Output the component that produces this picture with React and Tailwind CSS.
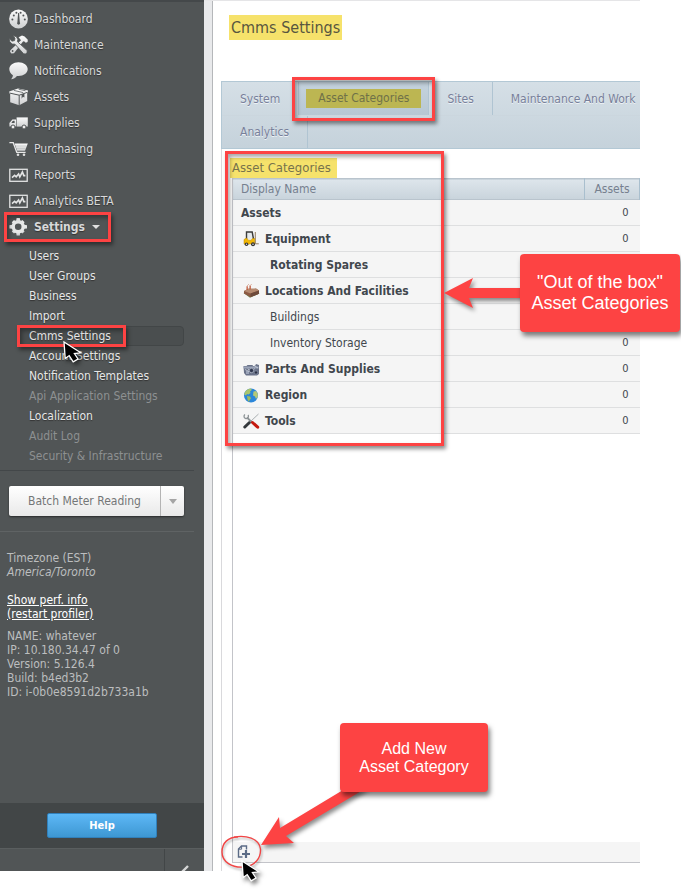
import clsx from 'clsx'

const NAV_ITEMS = [
  { label: 'Dashboard', icon: GaugeIcon },
  { label: 'Maintenance', icon: WrenchHammerIcon },
  { label: 'Notifications', icon: BubbleIcon },
  { label: 'Assets', icon: BoxIcon },
  { label: 'Supplies', icon: TruckIcon },
  { label: 'Purchasing', icon: CartIcon },
  { label: 'Reports', icon: ChartIcon },
  { label: 'Analytics BETA', icon: ChartIcon },
]

const SETTINGS_ITEMS = [
  { label: 'Users' },
  { label: 'User Groups' },
  { label: 'Business' },
  { label: 'Import' },
  { label: 'Cmms Settings', active: true },
  { label: 'Account Settings' },
  { label: 'Notification Templates' },
  { label: 'Api Application Settings', disabled: true },
  { label: 'Localization' },
  { label: 'Audit Log', disabled: true },
  { label: 'Security & Infrastructure', disabled: true },
]

const BUILD_INFO = [
  'NAME: whatever',
  'IP: 10.180.34.47 of 0',
  'Version: 5.126.4',
  'Build: b4ed3b2',
  'ID: i-0b0e8591d2b733a1b',
]

const CATEGORIES = [
  { name: 'Assets', level: 0, count: 0 },
  { name: 'Equipment', level: 1, icon: ForkliftIcon, count: 0 },
  { name: 'Rotating Spares', level: 2, bold: true },
  { name: 'Locations And Facilities', level: 1, icon: FactoryIcon },
  { name: 'Buildings', level: 2 },
  { name: 'Inventory Storage', level: 2, count: 0 },
  { name: 'Parts And Supplies', level: 1, icon: EngineIcon, count: 0 },
  { name: 'Region', level: 1, icon: GlobeIcon, count: 0 },
  { name: 'Tools', level: 1, icon: ToolsIcon, count: 0 },
]

/* ---------- sidebar icons ---------- */

function SilverGradient({ id }) {
  return (
    <linearGradient id={id} x1="0" y1="0" x2="0" y2="1">
      <stop offset="0" stopColor="#fafafa" />
      <stop offset="1" stopColor="#cfd1d2" />
    </linearGradient>
  )
}

function GaugeIcon() {
  return (
    <svg width="20" height="20" viewBox="0 0 20 20">
      <defs><SilverGradient id="g-gauge" /></defs>
      <circle cx="9.5" cy="10" r="9.4" fill="url(#g-gauge)" />
      <g fill="#515556">
        <circle cx="3.4" cy="10.5" r="1" />
        <circle cx="4.8" cy="6.4" r="1" />
        <circle cx="7.4" cy="3.8" r="1" />
        <circle cx="11.6" cy="3.8" r="1" />
        <circle cx="14.4" cy="6.4" r="1" />
        <circle cx="15.8" cy="10.5" r="1" />
        <path d="M9.1 4h1l.7 9.2a1.5 1.5 0 1 1-2.4 0z" />
      </g>
    </svg>
  )
}

function WrenchHammerIcon() {
  return (
    <svg width="20" height="20" viewBox="0 0 20 20">
      <defs><SilverGradient id="g-wrench" /></defs>
      <path d="M9.600 2.200 13 .6l2.600 1 3.200 3.200-.2 2.200-1.800.8-1.800-1.600-1 .2L5 18.200l-2.600.4-1.400-1.800.4-1.600L12 5.200z" fill="url(#g-wrench)" />
      <path d="M4 .6 7.400 1.800l1.400 2.600-.4 2.200 9.800 9-.2 2-1.400 1.400-2-.2L6 9.200 3.200 9 .8 6.800.2 3.600l2.800 2.600 2.600-.6.4-2.400z" fill="url(#g-wrench)" stroke="#515556" strokeWidth=".8" />
      <circle cx="3.600" cy="16" r=".9" fill="#515556" />
    </svg>
  )
}

function BubbleIcon() {
  return (
    <svg width="20" height="20" viewBox="0 0 20 20">
      <defs><SilverGradient id="g-bubble" /></defs>
      <path d="M9.5 1.2c5.2 0 9.2 3 9.2 6.900s-4 7-9.200 7c-.6 0-1 0-1.600-.1-1.300 1.900-3.300 3-5.900 3.300 1-.9 1.800-2.400 1.900-4.100C1.600 12.900.3 10.700.3 8.100.3 4.200 4.300 1.200 9.500 1.200z" fill="url(#g-bubble)" />
    </svg>
  )
}

function BoxIcon() {
  return (
    <svg width="20" height="20" viewBox="0 0 20 20">
      <defs><SilverGradient id="g-box" /></defs>
      <path d="M.2 4.400 9 1.600l10 2v2l-.8.600V14l-8 4.200-9-3V7L.2 6.200z" fill="url(#g-box)" />
      <path d="M.4 6 10.200 8.200l8.600-3M10.200 8.200v10" fill="none" stroke="#515556" strokeWidth="1" />
      <path d="m4.800 3.400 9.400 2.200M9.600 2.200l7 1.600" fill="none" stroke="#777b7c" strokeWidth="1" />
      <path d="M12.600 7.600 15.400 6.600v4l-1.500-.9-1.300 2z" fill="#515556" />
    </svg>
  )
}

function TruckIcon() {
  return (
    <svg width="20" height="20" viewBox="0 0 20 20">
      <defs><SilverGradient id="g-truck" /></defs>
      <path d="M7.600 4.400h11.200v9.200H7.600z" fill="url(#g-truck)" />
      <path d="M3.400 6.600h3.600v7H.4V10z" fill="url(#g-truck)" />
      <path d="M3.800 7.800h1.800v2.200H2.400z" fill="#515556" />
      <g fill="#eee" stroke="#515556" strokeWidth="1">
        <circle cx="4" cy="14" r="2" />
        <circle cx="15" cy="14" r="2" />
      </g>
    </svg>
  )
}

function CartIcon() {
  return (
    <svg width="20" height="20" viewBox="0 0 20 20">
      <defs><SilverGradient id="g-cart" /></defs>
      <path d="M.4 3.600h3.800l3.600 9.800h8.800" fill="none" stroke="#e8e8e8" strokeWidth="1.400" />
      <path d="M5.600 4.600H18.800L16 11.800H8.200z" fill="url(#g-cart)" />
      <path d="M6.400 7h11M7.400 9.300h9.200" stroke="#999c9d" strokeWidth=".4" />
      <circle cx="9" cy="15.800" r="1.300" fill="#e0e0e0" />
      <circle cx="15" cy="15.800" r="1.300" fill="#e0e0e0" />
    </svg>
  )
}

function ChartIcon() {
  return (
    <svg width="20" height="20" viewBox="0 0 20 20" fill="none" stroke="#e3e4e4">
      <rect x=".8" y="4.300" width="17.400" height="12" strokeWidth="1.300" />
      <path d="M3 12.600 5.600 10.400l1.600 1.400 2.400-2.800 1.200 2.800L13.400 7l1.400 3.600 1.600 0" strokeWidth="1.600" />
    </svg>
  )
}

function GearIcon() {
  return (
    <svg width="20" height="20" viewBox="0 0 20 20">
      <defs><SilverGradient id="g-gear" /></defs>
      <g fill="url(#g-gear)">
        <path d="M7.600 1h3.200l.4 3H7.200zM7.600 18.600h3.200l.4-3H7.200zM.400 8.200v3.200l3 .4V7.800zM18 8.200v3.200l-3 .4V7.800zM2.800 5.200 5 3l2.400 1.800L4.600 7.600zM13.400 3l2.200 2.200-1.800 2.400L11 4.800zM15.600 14.400l-2.200 2.200-2.400-1.800 2.800-2.800zM5 16.600l-2.200-2.200L4.600 12l2.800 2.800z" />
      </g>
      <circle cx="9.200" cy="9.800" r="5" fill="none" stroke="#e6e7e7" strokeWidth="3.400" />
    </svg>
  )
}

/* ---------- category icons ---------- */

function ForkliftIcon() {
  return (
    <svg width="17" height="17" viewBox="0 0 17 17">
      <path d="M3.500 9V2h5.700l1.300 7" fill="#e6eaec" stroke="#3b3b3b" strokeWidth="1.400" />
      <path d="M12.300 2v11.800h3.500" fill="none" stroke="#8b7355" strokeWidth=".9" />
      <path d="M1 9.500 3.500 8l2 2.200H8L9.500 8.500h2.200V14H1z" fill="#f2b705" stroke="#b98700" strokeWidth=".5" />
      <circle cx="3.500" cy="14.200" r="1.800" fill="#333" />
      <circle cx="10" cy="14.200" r="2" fill="#333" />
      <circle cx="3.500" cy="14.200" r=".7" fill="#ddd" />
      <circle cx="10" cy="14.200" r=".8" fill="#ddd" />
    </svg>
  )
}

function FactoryIcon() {
  return (
    <svg width="17" height="17" viewBox="0 0 17 17">
      <path d="m.5 11 6.500 4.800 9.500-4.300-6-4.500z" fill="#6c7a4c" />
      <path d="m1 9 5-2.500 2.500 1.300L13 6.500l3 2v3.300L7.500 15 1 11.500z" fill="#8c5a44" />
      <path d="m1 9 5-2.500L13 6.500l3 2-8.500 3z" fill="#b58a70" />
      <path d="M7.500 11.500 16 8.500v3.300L7.500 15z" fill="#6d4a3b" />
      <path d="M3.500 8V4.200h1.300V8M6.500 7.500V3.500h1.300v4" fill="#c25a3c" />
      <path d="M4 4c.5-1 1.500-1 2-2m1 1.500c.5-1 1.500-.5 2-1.500" fill="none" stroke="#d6a896" strokeWidth=".8" />
    </svg>
  )
}

function EngineIcon() {
  return (
    <svg width="17" height="17" viewBox="0 0 17 17">
      <path d="M.5 6h3l1-1h5L10 6h2l1-2 3 1v9l-2 1.500H3L1 13z" fill="#6a7289" />
      <path d="M.5 6.500h15v2H.5zM3 11h3v3H3z" fill="#9aa3b8" />
      <path d="M5 8.500 8 13l3.500-4.500" fill="none" stroke="#c9cfda" strokeWidth=".9" />
      <circle cx="8.500" cy="10.500" r="2.200" fill="#313850" stroke="#b6bece" strokeWidth=".7" />
      <circle cx="13" cy="12.500" r="1.700" fill="#2b3044" stroke="#8d95aa" strokeWidth=".7" />
      <path d="M11 5.500 15 8M2 9.500l4 2" stroke="#c9cfda" strokeWidth=".8" />
    </svg>
  )
}

function GlobeIcon() {
  return (
    <svg width="17" height="17" viewBox="0 0 17 17">
      <circle cx="8" cy="9.500" r="7" fill="#2b86d9" />
      <path d="M2 6C3.500 3.500 5.500 2.700 8 2.500l.8 1.500L7 5.500 7.500 7 5.500 8.500 4 8 3 9.500 1.200 8.500z" fill="#a9c46c" />
      <path d="M4 10l3 .5 1 1.800-1.500 2.200-.7 1.500L4.500 13.500z" fill="#9dbb5e" />
      <path d="m10.500 5.500 2.500-.5 1.700 2.500.2 3-1.900 2.500-1-2.500-2-1z" fill="#b5c878" />
    </svg>
  )
}

function ToolsIcon() {
  return (
    <svg width="17" height="17" viewBox="0 0 17 17">
      <path d="M15.500 2 7 10" stroke="#a9aeb0" strokeWidth="1" />
      <path d="M6.500 10.500 1.800 15" stroke="#33383b" strokeWidth="3" strokeLinecap="round" />
      <path d="m4 5.500 5 5" stroke="#8d9396" strokeWidth="1.800" />
      <path d="M2 2.500a2.200 2.200 0 1 0 3 .5" fill="none" stroke="#8d9396" strokeWidth="1.300" />
      <path d="m9.500 10.500 5.200 4.700" stroke="#c4190f" strokeWidth="3" strokeLinecap="round" />
    </svg>
  )
}

function AddPageIcon() {
  return (
    <svg width="14" height="14" viewBox="0 0 14 14" fill="none" stroke="#5b6b86">
      <path d="M9.500 4.500V1h-5L1.500 4v8H5.500" strokeWidth="1.400" />
      <path d="M4.600 1v3.200H1.500" />
      <path d="M9 5v8M5 9h8" strokeWidth="2.200" />
    </svg>
  )
}

/* ---------- annotations ---------- */

function Outline({ className }) {
  return (
    <span
      className={clsx(
        'pointer-events-none absolute z-10 border-[3px] border-[#fd4343] shadow-[2px_3px_4px_rgba(0,0,0,0.45),inset_2px_3px_4px_rgba(0,0,0,0.35)]',
        className,
      )}
    />
  )
}

function Cursor({ className }) {
  return (
    <svg
      className={clsx('pointer-events-none absolute z-20 drop-shadow-[2px_3px_2px_rgba(0,0,0,0.5)]', className)}
      width="20"
      height="23"
      viewBox="0 0 20 23"
    >
      <path d="M1 1 2.200 17.600 6.200 14.600 10.200 20.800 15 18 11.400 12.600 17.800 11.800z" fill="#000" stroke="#fff" strokeWidth="1.300" />
    </svg>
  )
}

function Callout({ className, children }) {
  return (
    <div
      className={clsx(
        'absolute z-20 flex items-center justify-center rounded bg-[#fd4343] text-center text-white font-["Liberation_Sans",sans-serif] shadow-[2px_4px_5px_rgba(0,0,0,0.5)]',
        className,
      )}
    >
      {children}
    </div>
  )
}

/* ---------- layout ---------- */

function Sidebar() {
  return (
    <aside className="flex w-[204px] shrink-0 flex-col border-t-2 border-[#44484a] bg-[#515556] text-[#d8d9da]">
      <nav className="pt-1">
        {NAV_ITEMS.map(({ label, icon: Icon }) => (
          <a key={label} href="#" className="flex h-[26px] items-center gap-[5px] pl-[9px] [text-shadow:0_1px_1px_#333]">
            <Icon />
            {label}
          </a>
        ))}
        <div className="relative">
          <a href="#" className="flex h-[26px] items-center gap-[5px] pl-[9px] font-bold [text-shadow:0_1px_1px_#333]">
            <GearIcon />
            Settings
            <span className="ml-0.5 border-x-4 border-t-4 border-x-transparent border-t-[#e0e0e0]" />
          </a>
          <Outline className="left-1 -top-0.5 h-[30px] w-[107px]" />
        </div>
        <ul className="mt-1.5">
          {SETTINGS_ITEMS.map(({ label, active, disabled }) => (
            <li
              key={label}
              className={clsx('relative mr-5 ml-[18px] h-5 border', active ? 'rounded-sm border-[#424647] bg-[#4a4e4f]' : 'border-transparent')}
            >
              <a
                href="#"
                className={clsx('block pl-2.5 leading-[18px]', disabled ? 'text-[#8d9091]' : 'text-[#e6e7e7] [text-shadow:0_1px_1px_#333]')}
              >
                {label}
              </a>
              {active && (
                <>
                  <Outline className="-left-0.5 -top-0.5 h-[22px] w-[109px]" />
                  <Cursor className="left-11 top-3.5" />
                </>
              )}
            </li>
          ))}
        </ul>
      </nav>

      <div className="mt-1 mr-2.5 border-t border-[#434749] pt-[15px]">
        <div className="mr-2.5 ml-[9px] flex h-[30px] overflow-hidden rounded-xs bg-linear-to-b from-white to-[#e9e9e9] text-[#747677] shadow-[0_1px_2px_rgba(0,0,0,0.5)]">
          <button className="flex-1">Batch Meter Reading</button>
          <button aria-label="More batch actions" className="flex w-6 items-center justify-center border-l border-[#b4b4b4]">
            <span className="border-x-4 border-t-[5px] border-x-transparent border-t-[#a5a5a5]" />
          </button>
        </div>
        <div className="mt-[15px] border-t border-[#5f6364]" />
      </div>

      <div className="mt-[19px] px-[7px] leading-[14px] text-[#bcbebf]">
        <p>Timezone (EST)</p>
        <p className="italic">America/Toronto</p>
        <p className="mt-3.5 text-white underline">
          <a href="#">Show perf. info</a>
          <br />
          <a href="#">(restart profiler)</a>
        </p>
        <div className="mt-2">
          {BUILD_INFO.map((line) => (
            <p key={line}>{line}</p>
          ))}
        </div>
      </div>

      <div className="mt-auto flex h-[45px] items-center justify-center bg-[#424647]">
        <button className="h-[25px] w-[110px] rounded-xs border border-[#3180bb] bg-linear-to-b from-[#5db8f6] to-[#3d97d3] text-[11px] font-bold text-white">
          Help
        </button>
      </div>
      <div className="flex h-[23px] justify-end overflow-hidden border-t border-[#5a5e5f]">
        <button aria-label="Collapse menu" className="w-10 border-l border-[#424647] pl-[15px]">
          <svg width="9" height="14" viewBox="0 0 9 14" className="mt-4" fill="none" stroke="#d5d6d6" strokeWidth="2.400">
            <path d="M8 1 2 7l6 6" />
          </svg>
        </button>
      </div>
    </aside>
  )
}

function Tab({ active, children }) {
  return (
    <a
      href="#"
      className={clsx(
        'relative flex h-full shrink-0 items-center border-r border-[#b0c4d2] whitespace-nowrap [text-shadow:0_1px_0_#eef3f6]',
        active ? 'bg-linear-to-b from-[#c5d3de] to-[#b7c7d3] px-[19px]' : 'px-[18px]',
      )}
    >
      {active ? (
        <mark className="-mx-3 bg-[#bcb652] px-3 leading-[19px] text-[#6f7148] [text-shadow:none]">{children}</mark>
      ) : (
        children
      )}
      {active && <Outline className="-inset-x-[7px] -top-[5px] -bottom-1.5" />}
    </a>
  )
}

function CategoryTable() {
  return (
    <table className="w-full border-collapse">
      <thead>
        <tr className="h-[21px] border-y border-[#b9c4cd] bg-linear-to-b from-[#dde5eb] to-[#c9d4dc] text-left text-[#76808f]">
          <th className="p-0 pl-2 font-normal">Display Name</th>
          <th className="w-[55px] border-x border-[#a9bfce] p-0 text-center font-normal">Assets</th>
        </tr>
      </thead>
      <tbody>
        {CATEGORIES.map(({ name, level, icon: Icon, bold, count }) => (
          <tr key={name} className="h-[26px] border-b border-[#dedfe0] bg-[#f5f5f5] text-[#41474d]">
            <td className="p-0">
              <span
                className={clsx(
                  'flex items-center gap-[5px]',
                  level === 0 && 'pl-2',
                  level === 1 && 'pl-2.5',
                  level === 2 && 'pl-[37px]',
                  (level < 2 || bold) && 'font-bold',
                )}
              >
                {Icon && <Icon />}
                {name}
              </span>
            </td>
            <td className="p-0 pr-[11px] text-right text-[11px]">{count}</td>
          </tr>
        ))}
      </tbody>
    </table>
  )
}

export default function App() {
  return (
    <div className='relative flex min-h-screen overflow-hidden bg-white pr-[41px] pb-[18px] text-[12px] leading-4 font-["DejaVu_Sans_Condensed","DejaVu_Sans",sans-serif]'>
      <Sidebar />

      <main className="flex min-w-0 flex-1 flex-col border-t border-[#e5e5e7]">
        <div className="flex flex-1 border-l-8 border-[#e8e9eb]">
          <div className="flex min-w-0 flex-1 flex-col border-l border-[#b5b7ba] pl-2">
            <h1 className="mt-3.5 ml-2 w-fit bg-[#f6e26b] px-0.5 text-base leading-[25px] text-[#58563f]">Cmms Settings</h1>

            <div className="mt-[41px] h-[68px] border border-r-0 border-[#b3c8d5] bg-linear-to-b from-[#d5dfe6] to-[#c5d2db] text-[#787f9a]">
              <div className="flex h-[33px] min-w-0">
                <Tab>System</Tab>
                <Tab active>Asset Categories</Tab>
                <Tab>Sites</Tab>
                <div className="flex min-w-0 overflow-hidden">
                  <Tab>Maintenance And Work</Tab>
                </div>
              </div>
              <div className="flex h-[33px] border-t border-[#cbd6de]">
                <Tab>Analytics</Tab>
              </div>
            </div>

            <div className="relative flex flex-1 flex-col border-l border-[#d9d9dc] pb-2 pl-2.5">
              <h2 className="mt-[9px] -ml-0.5 w-fit bg-[#f6e26b] pr-1.5 pl-0.5 text-[13px] leading-5 text-[#77734b]">Asset Categories</h2>
              <div className="flex flex-1 flex-col border-b border-l border-[#c3c4c9]">
                <CategoryTable />
                <div className="mt-auto flex h-5 items-center bg-[#f5f5f5] pl-1">
                  <button aria-label="Add asset category">
                    <AddPageIcon />
                  </button>
                </div>
              </div>
              <Outline className="top-0.5 left-[3px] h-[295px] w-[219px]" />
            </div>
          </div>
        </div>
      </main>

      {/* callouts */}
      <svg className="pointer-events-none absolute top-[270px] left-[444px] z-20 drop-shadow-[2px_3px_2px_rgba(0,0,0,0.45)]" width="80" height="46" viewBox="0 0 80 46">
        <path d="M0 23 29 8 25 18H80V28H25L29 38z" fill="#fd4343" />
      </svg>
      <Callout className="top-[254px] left-[520px] h-[78px] w-40 text-lg leading-[21px]">
        &quot;Out of the box&quot;
        <br />
        Asset Categories
      </Callout>

      <svg className="pointer-events-none absolute top-[785px] left-[255px] z-20 drop-shadow-[2px_3px_2px_rgba(0,0,0,0.45)]" width="120" height="65" viewBox="0 0 120 65">
        <path d="M6 60 24 32 25 43 93 2H113L31 51 39 58z" fill="#fd4343" />
      </svg>
      <Callout className="top-[723px] left-[340px] h-[69px] w-[148px] text-base leading-[18px]">
        Add New
        <br />
        Asset Category
      </Callout>

      <svg className="pointer-events-none absolute top-[834px] left-[220px] z-10 drop-shadow-[1px_2px_1px_rgba(0,0,0,0.3)]" width="44" height="38" viewBox="0 0 44 38">
        <path d="M14 3C26 1 39 4 40.500 15 41 24 35 32 24 33 12 34 2 28 2 18 2 9 8 3 18 3" fill="none" stroke="#f14545" strokeWidth="1.400" />
      </svg>
      <Cursor className="top-[860px] left-[241px]" />
    </div>
  )
}
